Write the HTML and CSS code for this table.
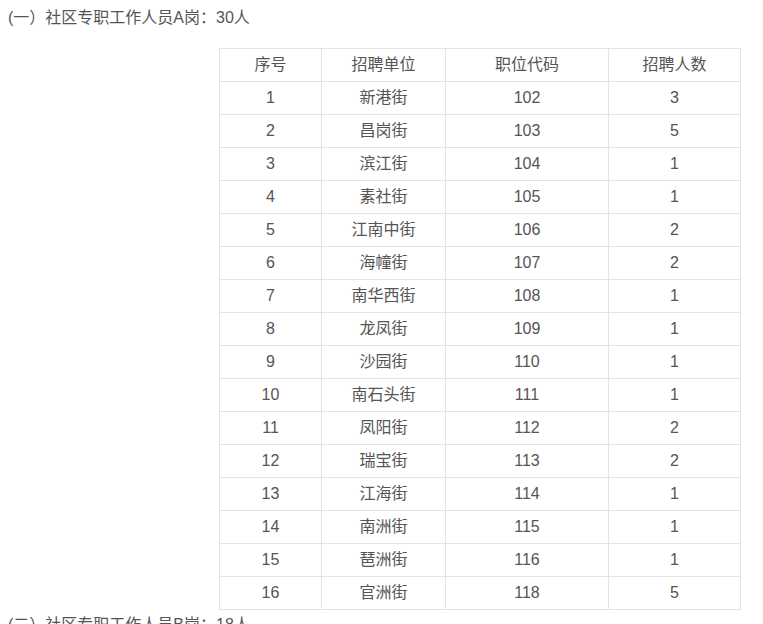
FILE: index.html
```html
<!DOCTYPE html>
<html lang="zh">
<head>
<meta charset="utf-8">
<link rel="stylesheet" href="styles.css">
</head>
<body>
<div class="page">
<p class="title">(一）社区专职工作人员A岗：30人</p>
<table class="jobs">
<thead>
<tr><th>序号</th><th>招聘单位</th><th>职位代码</th><th>招聘人数</th></tr>
</thead>
<tbody>
<tr><td>1</td><td>新港街</td><td>102</td><td>3</td></tr>
<tr><td>2</td><td>昌岗街</td><td>103</td><td>5</td></tr>
<tr><td>3</td><td>滨江街</td><td>104</td><td>1</td></tr>
<tr><td>4</td><td>素社街</td><td>105</td><td>1</td></tr>
<tr><td>5</td><td>江南中街</td><td>106</td><td>2</td></tr>
<tr><td>6</td><td>海幢街</td><td>107</td><td>2</td></tr>
<tr><td>7</td><td>南华西街</td><td>108</td><td>1</td></tr>
<tr><td>8</td><td>龙凤街</td><td>109</td><td>1</td></tr>
<tr><td>9</td><td>沙园街</td><td>110</td><td>1</td></tr>
<tr><td>10</td><td>南石头街</td><td>111</td><td>1</td></tr>
<tr><td>11</td><td>凤阳街</td><td>112</td><td>2</td></tr>
<tr><td>12</td><td>瑞宝街</td><td>113</td><td>2</td></tr>
<tr><td>13</td><td>江海街</td><td>114</td><td>1</td></tr>
<tr><td>14</td><td>南洲街</td><td>115</td><td>1</td></tr>
<tr><td>15</td><td>琶洲街</td><td>116</td><td>1</td></tr>
<tr><td>16</td><td>官洲街</td><td>118</td><td>5</td></tr>
</tbody>
</table>
<p class="title next">(二）社区专职工作人员B岗：18人</p>
</div>
</body>
</html>
```
FILE: styles.css
```css
html, body {
  margin: 0;
  padding: 0;
  background: #fff;
}
.page {
  padding: 6px 8px 0 8px;
  font-family: "Liberation Sans", "Noto Sans CJK SC", sans-serif;
  font-size: 16px;
  color: #555;
}
.title {
  margin: 0;
  line-height: 24px;
}
.title.next {
  margin-top: 3px;
}
.jobs {
  margin: 18px 0 0 211px;
  border-collapse: collapse;
  width: 522px;
}
.jobs th, .jobs td {
  border: 1px solid #e3e3e3;
  height: 32px;
  padding: 0;
  text-align: center;
  font-weight: normal;
  line-height: 20px;
}
.jobs th:nth-child(1) { width: 101px; }
.jobs th:nth-child(2) { width: 123px; }
.jobs th:nth-child(3) { width: 162px; }
.jobs th:nth-child(4) { width: 131px; }
```
